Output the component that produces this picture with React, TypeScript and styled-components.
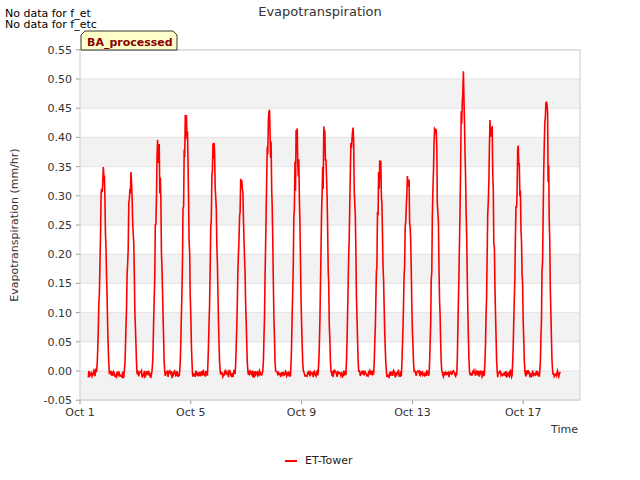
import React from "react";
import styled, { createGlobalStyle } from "styled-components";

const G = createGlobalStyle`
  body { margin: 0; background: #fff; font-family: "DejaVu Sans", sans-serif; }
`;
const Page = styled.div`
  position: relative; width: 640px; height: 480px; overflow: hidden; background: #fff;
`;
const Title = styled.div`
  text-align: center; font-size: 13px; color: #333; padding-top: 4px; height: 20px;
`;
const Note = styled.div`
  position: absolute; left: 5px; top: ${(p: { top: number }) => p.top}px; font-size: 11px; line-height: 12px; color: #000;
`;
const Legend = styled.div`
  position: absolute; left: 285px; top: 454px; display: flex; align-items: center; gap: 8px;
  font-size: 11px; color: #222;
`;
const Swatch = styled.span`width: 12px; height: 2px; background: #f00; display: inline-block;`;
const Svg = styled.svg`position: absolute; left: 0; top: 0;`;

const X0 = 80, X1 = 580, Y0 = 50, Y1 = 400;
const yv = (v: number) => 371 - v * 584;
const dayX = (d: number) => 80 + d * 27.7;

function rnd(s: number) { const x = Math.sin(s * 12.9898) * 43758.5453; return x - Math.floor(x); }

const peaks = [0.35, 0.355, 0.4, 0.44, 0.4, 0.36, 0.455, 0.42, 0.42, 0.43, 0.365, 0.35, 0.425, 0.515, 0.445, 0.41, 0.48];
function buildPath() {
  const pts: string[] = [];
  let i = 0;
  for (let t = 0.3; t <= 17.35; t += 0.02) {
    const s = t + 0.68;
    const day = Math.floor(s) - 1;
    const f = s - Math.floor(s);
    const pk = peaks[Math.max(0, Math.min(day, 16))] ?? 0;
    let v = -0.005 + (rnd(i) - 0.5) * 0.012;
    if (f > 0.28 && f < 0.74) {
      const ph = (f - 0.28) / 0.46;
      v = pk * Math.pow(Math.sin(Math.PI * ph), 1.6) * (0.8 + 0.25 * rnd(i + 7));
      if (Math.abs(ph - 0.5) < 0.08) v = pk * (0.85 + 0.15 * rnd(i + 3));
    }
    pts.push(`${dayX(t).toFixed(1)},${yv(v).toFixed(1)}`);
    i++;
  }
  return "M" + pts.join("L");
}

export default function App() {
  const ticks = [0.55, 0.5, 0.45, 0.4, 0.35, 0.3, 0.25, 0.2, 0.15, 0.1, 0.05, 0, -0.05];
  const xt = [["Oct 1", 0], ["Oct 5", 4], ["Oct 9", 8], ["Oct 13", 12], ["Oct 17", 16]] as const;
  return (
    <Page>
      <G />
      <Title>Evapotranspiration</Title>
      <Note top={8}>No data for f_et</Note>
      <Note top={19}>No data for f_etc</Note>
      <Svg width={640} height={480}>
        <rect x={X0} y={Y0} width={X1 - X0} height={Y1 - Y0} fill="#fff" />
        {ticks.slice(0, -1).map((t, k) =>
          k % 2 === 1 ? <rect key={k} x={X0} y={yv(t)} width={X1 - X0} height={29.2} fill="#f2f2f2" /> : null)}
        {ticks.map((t) => (
          <g key={t}>
            <line x1={X0} x2={X1} y1={yv(t)} y2={yv(t)} stroke="#ddd" strokeWidth={0.8} />
            <line x1={X0 - 4} x2={X0} y1={yv(t)} y2={yv(t)} stroke="#999" />
            <text x={X0 - 8} y={yv(t) + 4} fontSize={11} textAnchor="end" fill="#333" fontFamily="DejaVu Sans">
              {t.toFixed(2)}
            </text>
          </g>
        ))}
        {xt.map(([l, d]) => (
          <g key={l}>
            <line x1={dayX(d)} x2={dayX(d)} y1={Y1} y2={Y1 + 4} stroke="#999" />
            <text x={dayX(d)} y={416} fontSize={11} textAnchor="middle" fill="#333" fontFamily="DejaVu Sans">{l}</text>
          </g>
        ))}
        <rect x={X0} y={Y0} width={X1 - X0} height={Y1 - Y0} fill="none" stroke="#ccc" />
        <text x={578} y={433} fontSize={11} textAnchor="end" fill="#333" fontFamily="DejaVu Sans">Time</text>
        <text transform="translate(18,225) rotate(-90)" fontSize={11} textAnchor="middle" fill="#333" fontFamily="DejaVu Sans">
          Evapotranspiration (mm/hr)
        </text>
        <path d={buildPath()} fill="none" stroke="#f00" strokeWidth={1.6} />
        <path d="M81,50 L81,35 L85,31 L173,31 L177,35 L177,50 Z" fill="#ffffcc" stroke="#000" strokeWidth={0.8} />
        <text x={87} y={46} fontSize={11} fontWeight="bold" fill="#8b0000" fontFamily="DejaVu Sans">BA_processed</text>
      </Svg>
      <Legend><Swatch />ET-Tower</Legend>
    </Page>
  );
}
